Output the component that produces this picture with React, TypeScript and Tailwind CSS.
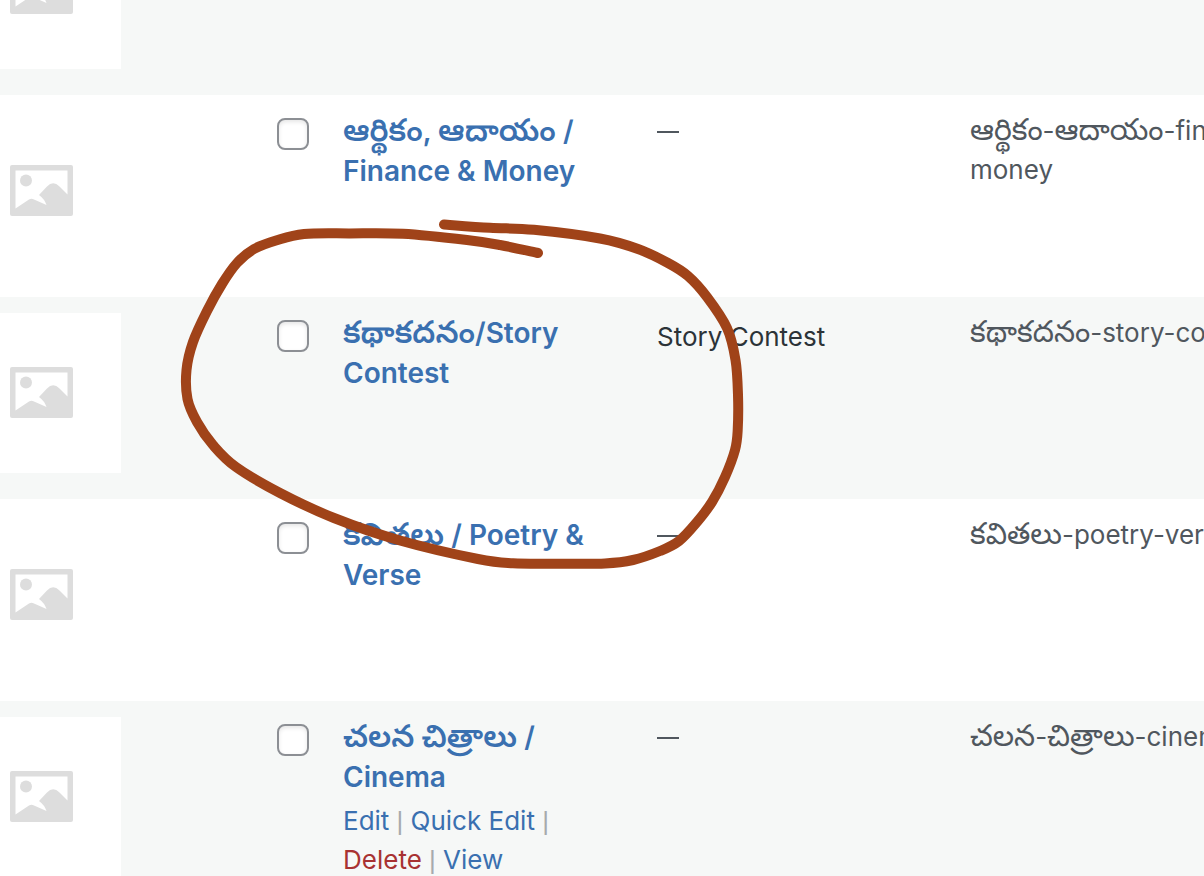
type Category = {
  id: string;
  name: string;
  description?: string;
  slug: string[];
  actions?: boolean;
};

const categories: Category[] = [
  { id: 'finance', name: 'ఆర్థికం, ఆదాయం / Finance & Money', slug: ['ఆర్థికం-ఆదాయం-finance-', 'money'] },
  { id: 'story', name: 'కథాకదనం/Story Contest', description: 'Story Contest', slug: ['కథాకదనం-story-contest'] },
  { id: 'poetry', name: 'కవితలు / Poetry & Verse', slug: ['కవితలు-poetry-verse'] },
  { id: 'cinema', name: 'చలన చిత్రాలు / Cinema', slug: ['చలన-చిత్రాలు-cinema'], actions: true },
];

const strokePoints = [
  [444, 224.5], [490, 227.8], [534, 229.8], [600, 238.5], [638, 249], [668, 263], [688, 276], [707, 297],
  [727, 328], [735.5, 360], [738, 395], [737.7, 430], [735, 450], [725, 477], [712, 502],
  [697, 522], [679, 541], [660, 551], [633, 560], [605, 563.5], [560, 563.7], [513, 563.3], [478, 559],
  [400, 540.5], [334, 518], [280, 493], [236, 467], [213, 445], [197, 422], [187.5, 399],
  [186.5, 370], [193, 342], [207, 311], [222, 284], [237, 263], [254, 249], [276, 240.5], [304, 234],
  [350, 233.4], [403, 233.8], [467, 240], [500, 245], [538, 253],
];

// Smooth curve through every point (Catmull-Rom converted to cubic Béziers).
function smoothPath(points: number[][]) {
  let d = `M${points[0][0]} ${points[0][1]}`;
  for (let i = 0; i < points.length - 1; i++) {
    const before = points[Math.max(i - 1, 0)];
    const from = points[i];
    const to = points[i + 1];
    const after = points[Math.min(i + 2, points.length - 1)];
    d += `C${from[0] + (to[0] - before[0]) / 6} ${from[1] + (to[1] - before[1]) / 6}`;
    d += ` ${to[0] - (after[0] - from[0]) / 6} ${to[1] - (after[1] - from[1]) / 6}`;
    d += ` ${to[0]} ${to[1]}`;
  }
  return d;
}

// Telugu glyphs run small beside Latin ones, so they get a larger size.
function MixedText({ text, teluguClass }: { text: string; teluguClass: string }) {
  return (
    <>
      {text.split(/([\u0c00-\u0c7f]+)/).map((part, index) =>
        index % 2 === 1 ? (
          <span key={index} lang="te" className={teluguClass}>{part}</span>
        ) : (
          part
        ),
      )}
    </>
  );
}

function Thumbnail() {
  return (
    <div className="-ml-10 h-40 w-[161px] bg-white pt-[54px] pl-[50px]">
      <svg className="block h-[51px] w-[63px]" viewBox="0 0 63 51" aria-hidden="true">
        <rect width="63" height="51" rx="2" fill="#dddddd" />
        <path
          d="M5.500 5.500H57.500V29.500L49.500 21.500Q43 15 37 21.500L29 30Q34.500 34 36.500 40L24 34.500Q21.500 33 19 34.500L5.500 43.500Z"
          fill="#ffffff"
        />
        <circle cx="16" cy="15.500" r="6" fill="#dddddd" />
      </svg>
    </div>
  );
}

function Separator() {
  return <span className="font-['Liberation_Sans',sans-serif] leading-none">{' | '}</span>;
}

function RowActions() {
  return (
    <div className="mt-1 text-[26px] leading-[39px] text-[#a7aaad]">
      <a href="#edit" className="text-[#3a70b0]">Edit</a>
      <Separator />
      <button type="button" className="text-[#3a70b0]">Quick Edit</button>
      <Separator />
      <a href="#delete" className="text-[#a83232]">Delete</a>
      <Separator />
      <a href="#view" className="text-[#3a70b0]">View</a>
    </div>
  );
}

function CategoryRow({ category }: { category: Category }) {
  return (
    <tr className="h-[202px] align-top odd:bg-[#f6f8f7] even:bg-white">
      <td className="pt-4">
        <Thumbnail />
      </td>
      <td className="pt-[23px] pl-px">
        <input
          type="checkbox"
          aria-label={`Select ${category.name}`}
          className="block size-8 appearance-none rounded-lg border-2 border-[#8c8f94] bg-white shadow-[inset_0_2px_4px_rgba(0,0,0,0.1)]"
        />
      </td>
      <td className="pt-4 pr-10">
        <a href={`#${category.id}`} className="block text-[28px] leading-10 font-semibold text-[#3a70b0]">
          <MixedText text={category.name} teluguClass="text-[31px] leading-none" />
        </a>
        {category.actions && <RowActions />}
      </td>
      <td className="pt-5 text-[26px] leading-[39px]">
        {category.description ? (
          <p className="text-[#2c3338]">{category.description}</p>
        ) : (
          <span aria-label="No description" className="block pt-4">
            <span className="block h-0.5 w-[22px] bg-[#50575e]" />
          </span>
        )}
      </td>
      <td className="pt-4 text-[26px] leading-[39px] whitespace-nowrap text-[#50575e]">
        {category.slug.map((line) => (
          <span key={line} className="block">
            <MixedText text={line} teluguClass="text-[30px] leading-none" />
          </span>
        ))}
      </td>
    </tr>
  );
}

export default function App() {
  return (
    <main className="relative h-screen overflow-hidden bg-white font-['Inter','Noto_Sans_Telugu','Noto_Sans',sans-serif]">
      <table className="-mt-[107px] w-full table-fixed border-collapse text-left">
        <colgroup>
          <col className="w-[276px]" />
          <col className="w-[67px]" />
          <col className="w-[314px]" />
          <col className="w-[313px]" />
          <col />
        </colgroup>
        <tbody>
          <tr className="h-[202px] bg-[#f6f8f7] align-top">
            <td className="pt-4">
              <Thumbnail />
            </td>
            <td colSpan={4} />
          </tr>
          {categories.map((category) => (
            <CategoryRow key={category.id} category={category} />
          ))}
        </tbody>
      </table>
      <svg
        className="pointer-events-none absolute top-0 left-0 h-[876px] w-[1204px]"
        viewBox="0 0 1204 876"
        fill="none"
        aria-hidden="true"
      >
        <path
          d={smoothPath(strokePoints)}
          stroke="#a04319"
          strokeWidth="10"
          strokeLinecap="round"
          strokeLinejoin="round"
        />
      </svg>
    </main>
  );
}
